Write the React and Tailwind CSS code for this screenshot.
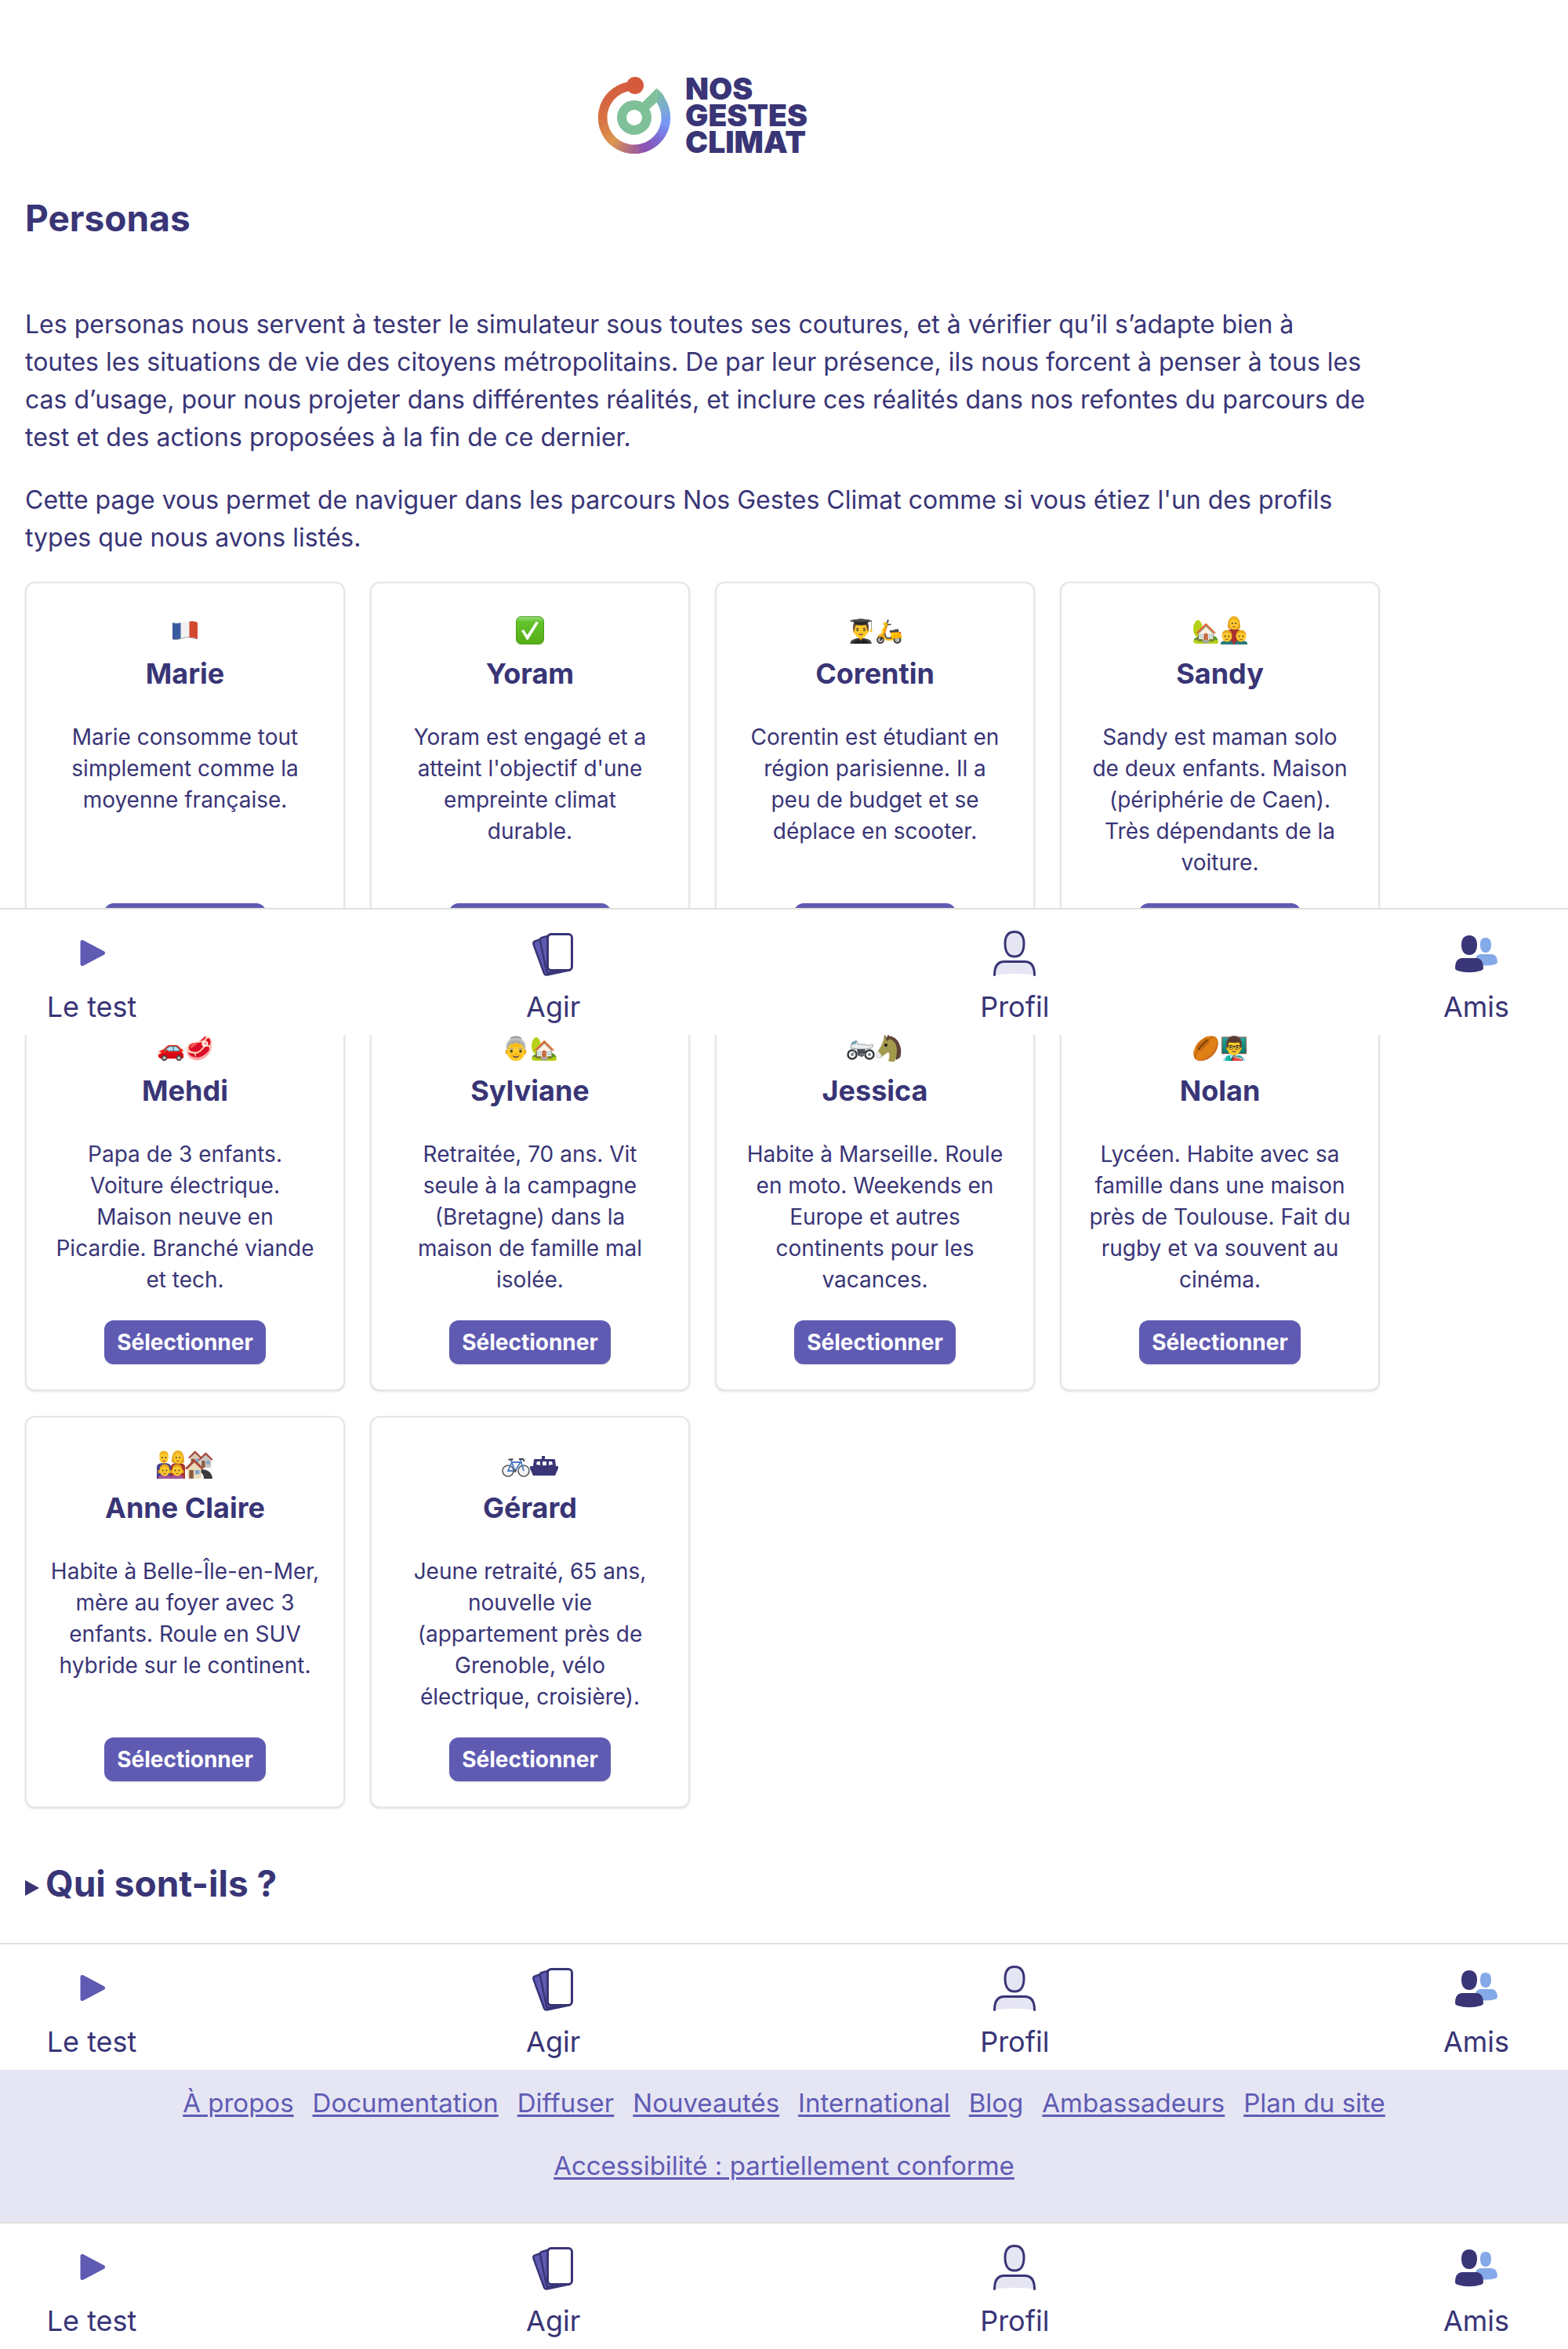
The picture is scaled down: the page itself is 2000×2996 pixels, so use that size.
const RING_STOPS = [
  [-35, [122, 180, 184]],
  [-15, [121, 168, 214]],
  [10, [117, 150, 247]],
  [45, [125, 100, 207]],
  [72, [138, 80, 176]],
  [100, [178, 108, 130]],
  [132, [221, 150, 76]],
  [170, [216, 116, 66]],
  [215, [212, 98, 62]],
  [264, [213, 90, 60]],
];

function ringColor(angle) {
  for (let i = 1; i < RING_STOPS.length; i++) {
    const [a1, c1] = RING_STOPS[i];
    if (angle <= a1) {
      const [a0, c0] = RING_STOPS[i - 1];
      const t = (angle - a0) / (a1 - a0);
      return `rgb(${c0.map((v, k) => Math.round(v + (c1[k] - v) * t)).join(",")})`;
    }
  }
  return "rgb(213,90,60)";
}

function point(radius, angle) {
  const a = (angle * Math.PI) / 180;
  return `${(radius * Math.cos(a)).toFixed(2)} ${(radius * Math.sin(a)).toFixed(2)}`;
}

function LogoMark() {
  const segments = [];
  for (let a = -35; a < 260; a += 3) segments.push(a);
  return (
    <svg className="h-[98px] w-[94px]" viewBox="-47 -52 94 98" aria-hidden="true">
      <defs>
        <linearGradient id="pointer" x1="20" y1="-37" x2="38" y2="-20" gradientUnits="userSpaceOnUse">
          <stop offset="0.2" stopColor="#80c098" />
          <stop offset="1" stopColor="#7ab4b8" />
        </linearGradient>
      </defs>
      {segments.map((a) => (
        <path
          key={a}
          d={`M${point(40.3, a)}A40.3 40.3 0 0 1 ${point(40.3, a + 3.6)}`}
          fill="none"
          stroke={ringColor(a + 1.5)}
          strokeWidth="11.6"
        />
      ))}
      <path d="M28.6 -37.4A46.1 46.1 0 0 1 38.6 -26.4L28.6 -19.4Z" fill="url(#pointer)" />
      <path d="M28.6 -37.4L29 -20L14 -6L8 -17Z" fill="#80c098" />
      <circle r="16" fill="none" stroke="#80c098" strokeWidth="12" />
      <circle cx="1" cy="-41" r="11" fill="#d55a3c" />
    </svg>
  );
}

function FlagIcon() {
  return (
    <svg className="h-9 w-9" viewBox="0 0 36 36" aria-hidden="true">
      <path d="M2 8Q7 10 13 8V28Q7 31 2 29Z" fill="#3a5ba0" />
      <path d="M12.5 8.2Q18 6.2 23.5 6.8V27Q18 26.5 12.5 28.5Z" fill="#f1f1f1" />
      <path d="M23.5 6.8Q29 5.5 34 8V29Q29 26.5 23.5 27Z" fill="#d1492f" />
      <path d="M2 29Q7 31 13 28.5T24 27T34 29" fill="none" stroke="#6b6b76" strokeOpacity="0.6" />
    </svg>
  );
}

function CheckIcon() {
  return (
    <svg className="h-9 w-9" viewBox="0 0 36 36" aria-hidden="true">
      <defs>
        <linearGradient id="check" x1="0" y1="0" x2="0" y2="1">
          <stop offset="0" stopColor="#9bdf7d" />
          <stop offset="0.2" stopColor="#62c32a" />
          <stop offset="1" stopColor="#56ad17" />
        </linearGradient>
      </defs>
      <rect x="0.5" y="0.5" width="35" height="35" rx="6" fill="url(#check)" stroke="#4b9d1f" />
      <path d="M7 18.5L10 17L14.5 24L25.5 7L29 8L15.5 30H14Z" fill="#fff" />
    </svg>
  );
}

function Kid({ x, girl }) {
  return (
    <g transform={`translate(${x} 0)`}>
      <path d="M-8 36V34Q-7 31 0 31T8 34V36Z" fill={girl ? "#a3559b" : "#2b7a78"} />
      {girl && <circle cx="-6.5" cy="27" r="2.2" fill="#e0a417" />}
      {girl && <circle cx="6.5" cy="27" r="2.2" fill="#e0a417" />}
      <ellipse cy="25.5" rx="6.4" ry="7" fill="#fcc92f" />
      <path d="M-6.4 24Q-6 17.5 0 17.5T6.4 24Q3 20.5 0 20.5T-6.4 24Z" fill="#e5a91b" />
      <circle cx="-2.4" cy="25.5" r="0.9" fill="#4a3213" />
      <circle cx="2.4" cy="25.5" r="0.9" fill="#4a3213" />
      <path d="M-2 29Q0 30.5 2 29" fill="none" stroke="#8a4b12" strokeWidth="0.9" />
    </g>
  );
}

function Adult({ x, woman, coat }) {
  return (
    <g transform={`translate(${x} 0)`}>
      <path d="M-9 36V20Q-8 16 0 16T9 20V36Z" fill={coat} />
      {woman && <path d="M-8 15Q-8 0 0 0T8 15Q5 18 0 17T-8 15Z" fill="#e3a11a" />}
      <ellipse cy="9" rx="5.8" ry="7.6" fill="#fcc92f" />
      <path d="M-5.8 7Q-6 0.5 0 0.5T5.8 7Q3 3.5 -1 4T-5.8 7Z" fill="#efb421" />
      <circle cx="-2.2" cy="9" r="0.9" fill="#4a3213" />
      <circle cx="2.2" cy="9" r="0.9" fill="#4a3213" />
      <path d="M-2 13Q0 14.5 2 13" fill="none" stroke="#b0451f" strokeWidth="1" />
    </g>
  );
}

function MotherIcon() {
  return (
    <svg className="h-9 w-9" viewBox="0 0 36 36" aria-hidden="true">
      <Adult x={18} woman coat="#a8322c" />
      <Kid x={9} />
      <Kid x={27} />
    </svg>
  );
}

function FamilyIcon() {
  return (
    <svg className="h-9 w-9" viewBox="0 0 36 36" aria-hidden="true">
      <Adult x={9} coat="#4d3f8f" />
      <Adult x={27} woman coat="#a8322c" />
      <Kid x={10} girl />
      <Kid x={26} girl />
    </svg>
  );
}

function House({ x, y, scale, wall }) {
  return (
    <g transform={`translate(${x} ${y}) scale(${scale})`}>
      <path d="M3 9L11 1L19 9V22H3Z" fill={wall} />
      <path d="M0 10L11 -1L22 10L20 11.500L11 3L2 11.500Z" fill="#a5493c" />
      <rect x="5" y="12" width="5" height="10" fill="#8a5a3c" />
      <rect x="12" y="12" width="5" height="5" fill="#7ea3cf" />
    </g>
  );
}

function VillageIcon() {
  return (
    <svg className="h-9 w-9" viewBox="0 0 36 36" aria-hidden="true">
      <House x={4} y={1} scale={0.8} wall="#d9c9b4" />
      <House x={17} y={3} scale={0.85} wall="#c9c3c4" />
      <path d="M20 24Q34 24 35 36H24Q24 30 20 28Z" fill="#3b3b3f" />
      <House x={0} y={12} scale={1.08} wall="#ecdcb8" />
    </svg>
  );
}

function MotorcycleIcon() {
  return (
    <svg className="h-9 w-9" viewBox="0 0 36 36" aria-hidden="true">
      <g fill="none" stroke="#33363b" strokeWidth="2.4">
        <circle cx="7" cy="27" r="5.5" />
        <circle cx="29" cy="27" r="5.5" />
      </g>
      <circle cx="7" cy="27" r="2" fill="#7d8287" />
      <circle cx="29" cy="27" r="2" fill="#7d8287" />
      <path d="M13 20L23 19L25 27L19 30L14 28Z" fill="#4b4f55" />
      <path d="M8 26L12 15M24 27H16" stroke="#8c9196" strokeWidth="1.5" />
      <path
        d="M5 17Q7 10 13 10L14 14L22 14Q28 17 33 14Q35 17 31 19L23 20L13 20Q8 19 5 19Z"
        fill="#e9ebec"
        stroke="#84898d"
        strokeWidth="0.8"
      />
      <path d="M5 15Q7 9 13 9L12 13Z" fill="#6fa3ae" />
    </svg>
  );
}

function HorseIcon() {
  return (
    <svg className="h-9 w-9" viewBox="0 0 36 36" aria-hidden="true">
      <path d="M17 3Q27 4 31 13T32 31L27 34L22 15Z" fill="#5e4338" />
      <path d="M11 8L12 1L15 6L17 1L19 7Q27 10 28 20Q28 30 25 36Q21 37 17 35Q20 27 17 24Q12 27 9 30Q5 33 2 31Q0 27 4 22Q8 17 11 8Z" fill="#a39a4e" />
      <path d="M12 1L15 6L17 1L19 7L15 10Z" fill="#5e4338" />
      <path d="M2 31Q-0.5 28 4 22L9 29Q5 33 2 31Z" fill="#e8e8ee" />
      <circle cx="14" cy="15" r="2" fill="#1d1a17" />
    </svg>
  );
}

function BicycleIcon() {
  return (
    <svg className="h-9 w-9" viewBox="0 0 36 36" aria-hidden="true">
      <g fill="none" stroke="#55595e" strokeWidth="1.6">
        <circle cx="8" cy="26" r="7" fill="#f3f4f5" />
        <circle cx="28" cy="26" r="7" fill="#f3f4f5" />
      </g>
      <path d="M8 26L13 15H24L17 26ZM17 26L11.5 12M24 12L28 26" fill="none" stroke="#4a78c4" strokeWidth="1.8" />
      <path d="M8.500 11.500H14.500M22 11H27Q29 12 28 14" fill="none" stroke="#3a3a3d" strokeWidth="1.800" />
      <circle cx="17" cy="26" r="2" fill="#55595e" />
    </svg>
  );
}

function FerryIcon() {
  return (
    <svg className="h-9 w-9" viewBox="0 0 36 36" aria-hidden="true">
      <path
        fillRule="evenodd"
        fill="#393576"
        d="M15 7H19V11H31Q32 11 32 12L33 20H35Q37 20 36 23L32 32H4L0 23Q-1 20 1 20H4L5 12Q5 11 6 11H15ZM9 14L8 18Q11 18 13 19V14ZM16 14V19H21V14ZM24 14V19Q26 18 29 18L28 14Z"
      />
    </svg>
  );
}

function Emoji({ children }) {
  return <span className="flex h-9 w-9 items-center justify-center text-[29px] leading-none">{children}</span>;
}

function PlayIcon() {
  return (
    <svg className="h-[60px] w-[60px]" viewBox="0 0 60 60" aria-hidden="true">
      <path d="M18 14.5V42.5L44.5 28.5Z" fill="#5f5bb3" stroke="#5f5bb3" strokeWidth="5" strokeLinejoin="round" />
    </svg>
  );
}

function CardsIcon() {
  return (
    <svg className="h-[60px] w-[60px]" viewBox="0 0 60 60" aria-hidden="true">
      <g stroke="#393576" strokeWidth="2.5" strokeLinejoin="round">
        <path d="M4.5 17.5Q3.5 14.5 6.5 13.5L22 8L50 50.5L21.5 56.5Q19 57 18 54.5Z" fill="#5f5bb3" />
        <path d="M13 13Q12.5 9.5 15.5 8.8L26 6L50 50L24 54Q21.5 54 21 51.5Z" fill="#5f5bb3" />
        <rect x="22.5" y="4.5" width="31" height="46" rx="4.5" fill="#fff" strokeWidth="3" />
      </g>
    </svg>
  );
}

function ProfileIcon() {
  return (
    <svg className="h-[60px] w-[60px]" viewBox="0 0 60 60" aria-hidden="true">
      <path d="M4.5 56.5Q5 39.5 17 39.5H43Q55 39.5 55.5 56.5Q30 53 4.5 56.5Z" fill="#e6e5f3" />
      <g stroke="#393576" strokeWidth="3" strokeLinecap="round">
        <path d="M30 1.5C39 1.5 42 8 42 16.5C42 26 38.5 33 30 33S18 26 18 16.5C18 8 21 1.5 30 1.5Z" fill="#e6e5f3" />
        <path d="M4.5 56.5Q4.5 39.5 17 39.5H43Q55.5 39.5 55.5 56.5" fill="none" />
      </g>
    </svg>
  );
}

function FriendsIcon() {
  return (
    <svg className="h-[60px] w-[60px]" viewBox="0 0 60 60" aria-hidden="true">
      <g fill="#84a9e8">
        <path d="M42 9C47 9 49 12.5 49 18S47 28 42 28S35 24 35 18S37 9 42 9Z" />
        <path d="M29 36Q30 30 36 30H49Q56 30 57 39Q57 42 54 43Q42 46 30 43Z" />
      </g>
      <g fill="#393576">
        <path d="M21 6C28 6 31 11 31 18S28 31 21 31S11 25 11 18S14 6 21 6Z" />
        <path d="M11 35H31Q39 36 39 48Q39 50 36 51Q21 55.5 6 51Q3 50 3 48Q3 36 11 35Z" />
      </g>
    </svg>
  );
}

const NAV_ITEMS = [
  { label: "Le test", Icon: PlayIcon },
  { label: "Agir", Icon: CardsIcon },
  { label: "Profil", Icon: ProfileIcon },
  { label: "Amis", Icon: FriendsIcon },
];

function NavBar() {
  return (
    <nav className="w-full border-t-2 border-[#e1e1db] bg-white px-8 pt-[27px] pb-[9px]">
      <ul className="flex justify-between">
        {NAV_ITEMS.map(({ label, Icon }) => (
          <li key={label} className="w-[170px]">
            <a href="#" className="flex flex-col items-center gap-[10px] text-[36px] leading-[54px]">
              <Icon />
              {label}
            </a>
          </li>
        ))}
      </ul>
    </nav>
  );
}

const PERSONAS = [
  { name: "Marie", icons: [<FlagIcon />], text: "Marie consomme tout\nsimplement comme la\nmoyenne française." },
  { name: "Yoram", icons: [<CheckIcon />], text: "Yoram est engagé et a\natteint l'objectif d'une\nempreinte climat\ndurable." },
  { name: "Corentin", icons: [<Emoji>👨‍🎓</Emoji>, <Emoji>🛵</Emoji>], text: "Corentin est étudiant en\nrégion parisienne. Il a\npeu de budget et se\ndéplace en scooter." },
  { name: "Sandy", icons: [<Emoji>🏡</Emoji>, <MotherIcon />], text: "Sandy est maman solo\nde deux enfants. Maison\n(périphérie de Caen).\nTrès dépendants de la\nvoiture." },
  { name: "Mehdi", icons: [<Emoji>🚗</Emoji>, <Emoji>🥩</Emoji>], text: "Papa de 3 enfants.\nVoiture électrique.\nMaison neuve en\nPicardie. Branché viande\net tech." },
  { name: "Sylviane", icons: [<Emoji>👵</Emoji>, <Emoji>🏡</Emoji>], text: "Retraitée, 70 ans. Vit\nseule à la campagne\n(Bretagne) dans la\nmaison de famille mal\nisolée." },
  { name: "Jessica", icons: [<MotorcycleIcon />, <HorseIcon />], text: "Habite à Marseille. Roule\nen moto. Weekends en\nEurope et autres\ncontinents pour les\nvacances." },
  { name: "Nolan", icons: [<Emoji>🏉</Emoji>, <Emoji>👨‍🏫</Emoji>], text: "Lycéen. Habite avec sa\nfamille dans une maison\nprès de Toulouse. Fait du\nrugby et va souvent au\ncinéma." },
  { name: "Anne Claire", icons: [<FamilyIcon />, <VillageIcon />], text: "Habite à Belle-Île-en-Mer,\nmère au foyer avec 3\nenfants. Roule en SUV\nhybride sur le continent." },
  { name: "Gérard", icons: [<BicycleIcon />, <FerryIcon />], text: "Jeune retraité, 65 ans,\nnouvelle vie\n(appartement près de\nGrenoble, vélo\nélectrique, croisière)." },
];

function PersonaCard({ name, icons, text }) {
  return (
    <li className="flex flex-col items-center rounded-xl border-2 border-[#e6e6ea] bg-white px-4 py-8 text-center shadow-sm">
      <div className="flex h-14 items-center justify-center">
        {icons.map((icon, i) => (
          <span key={i}>{icon}</span>
        ))}
      </div>
      <h2 className="text-[36px] leading-[54px] font-bold">{name}</h2>
      <p className="mt-[34px] mb-8 text-[28px] leading-[40px] whitespace-pre-line">{text}</p>
      <button
        type="button"
        className="mt-auto h-14 rounded-xl bg-[#5f5bb3] px-4 text-[28px] leading-[40px] font-bold text-white shadow-sm"
      >
        Sélectionner
      </button>
    </li>
  );
}

const LINKS = ["À propos", "Documentation", "Diffuser", "Nouveautés", "International", "Blog", "Ambassadeurs", "Plan du site"];

function FooterLink({ children }) {
  return (
    <a href="#" className="underline decoration-[3px] underline-offset-[3px]">
      {children}
    </a>
  );
}

export default function App() {
  return (
    <div className="relative bg-white font-['Inter','Liberation_Sans',sans-serif] text-[#393576]">
      <main className="max-w-[1792px] px-8 pt-24 pb-10">
        <a href="#" aria-label="Nos Gestes Climat" className="mb-11 flex items-center justify-center gap-[18px]">
          <LogoMark />
          <span className="text-[39px] leading-[34px] font-black">
            NOS
            <br />
            GESTES
            <br />
            CLIMAT
          </span>
        </a>
        <h1 className="mb-[76px] text-[46px] leading-[72px] font-bold">Personas</h1>
        <div className="mb-8 flex flex-col gap-8 text-[32px] leading-[48px]">
          <p className="whitespace-pre-line">
            {"Les personas nous servent à tester le simulateur sous toutes ses coutures, et à vérifier qu’il s’adapte bien à\ntoutes les situations de vie des citoyens métropolitains. De par leur présence, ils nous forcent à penser à tous les\ncas d’usage, pour nous projeter dans différentes réalités, et inclure ces réalités dans nos refontes du parcours de\ntest et des actions proposées à la fin de ce dernier."}
          </p>
          <p className="whitespace-pre-line">
            {"Cette page vous permet de naviguer dans les parcours Nos Gestes Climat comme si vous étiez l'un des profils\ntypes que nous avons listés."}
          </p>
        </div>
        <ul className="grid grid-cols-4 gap-8">
          {PERSONAS.map((p) => (
            <PersonaCard key={p.name} {...p} />
          ))}
        </ul>
        <details className="mt-[60px]">
          <summary className="flex list-none items-center gap-2 text-[46px] leading-[72px] font-bold">
            <svg className="mt-3 h-5 w-[18px]" viewBox="0 0 18 20" aria-hidden="true">
              <path d="M0 0L18 10L0 20Z" fill="#393576" />
            </svg>
            Qui sont-ils ?
          </summary>
        </details>
      </main>
      <div className="absolute inset-x-0 top-[1158px]">
        <NavBar />
      </div>
      <NavBar />
      <footer className="flex flex-col items-center gap-8 bg-[#e6e5f3] px-8 pt-[18px] pb-12 text-[33px] leading-[48px] text-[#5f5bb3]">
        <div className="flex flex-wrap justify-center gap-x-6">
          {LINKS.map((l) => (
            <FooterLink key={l}>{l}</FooterLink>
          ))}
        </div>
        <FooterLink>Accessibilité : partiellement conforme</FooterLink>
      </footer>
      <NavBar />
    </div>
  );
}
